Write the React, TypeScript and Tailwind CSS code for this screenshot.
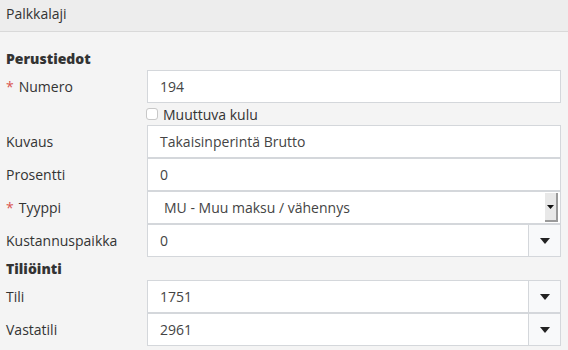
import React from "react";

const Caret = () => (
  <svg width="10" height="6" viewBox="0 0 10 6" className="block">
    <path d="M0 0h10L5 6z" fill="#222" />
  </svg>
);

const Label = ({ text, required }: { text: string; required?: boolean }) => (
  <div className="w-[147px] shrink-0 pl-[6px] flex items-center">
    {required && <span className="text-[#d9534f] mr-[5px]">*</span>}
    <span>{text}</span>
  </div>
);

const TextRow = ({ label, value, required }: { label: string; value: string; required?: boolean }) => (
  <div className="flex h-[33px]">
    <Label text={label} required={required} />
    <div className="flex-1 border border-[#d4d7db] bg-white flex items-center px-3 text-[#444]">{value}</div>
  </div>
);

const ComboRow = ({ label, value }: { label: string; value: string }) => (
  <div className="flex h-[33px]">
    <Label text={label} />
    <div className="flex-1 flex border border-[#d4d7db] bg-white">
      <div className="flex-1 flex items-center px-3 text-[#444]">{value}</div>
      <div className="w-[32px] border-l border-[#d4d7db] bg-[#f8f9fa] flex items-center justify-center">
        <Caret />
      </div>
    </div>
  </div>
);

export default function App() {
  return (
    <div
      className="w-[568px] h-[350px] bg-[#f4f4f4] text-[14px] text-[#333] overflow-hidden"
      style={{ fontFamily: '"Open Sans", sans-serif' }}
    >
      <div className="h-[32px] bg-[#ededed] border-b border-[#d9d9d9] flex items-center pl-[6px] pb-[4px]">
        Palkkalaji
      </div>
      <div className="pr-[7px]">
        <div className="h-[38px] flex items-end pl-[6px] pb-[1px] font-extrabold">Perustiedot</div>
        <TextRow label="Numero" value="194" required />
        <div className="flex h-[22px] items-center pl-[146px]">
          <span className="w-[12px] h-[12px] rounded-[3px] border border-[#c8c8c8] bg-white mr-[5px]" />
          <span>Muuttuva kulu</span>
        </div>
        <TextRow label="Kuvaus" value="Takaisinperintä Brutto" />
        <TextRow label="Prosentti" value="0" />
        <div className="flex h-[33px]">
          <Label text="Tyyppi" required />
          <div className="flex-1 border border-[#d4d7db] bg-white flex items-center pl-4 pr-[2px] text-[#444]">
            <span className="flex-1">MU - Muu maksu / vähennys</span>
            <div className="w-[13px] h-[29px] bg-[#e8e8e8] border-r-2 border-b-2 border-[#9a9a9a] flex items-center justify-center">
              <svg width="7" height="4" viewBox="0 0 7 4">
                <path d="M0 0h7L3.5 4z" fill="#111" />
              </svg>
            </div>
          </div>
        </div>
        <ComboRow label="Kustannuspaikka" value="0" />
        <div className="h-[23px] flex items-center pl-[6px] font-extrabold">Tiliöinti</div>
        <ComboRow label="Tili" value="1751" />
        <ComboRow label="Vastatili" value="2961" />
      </div>
    </div>
  );
}
